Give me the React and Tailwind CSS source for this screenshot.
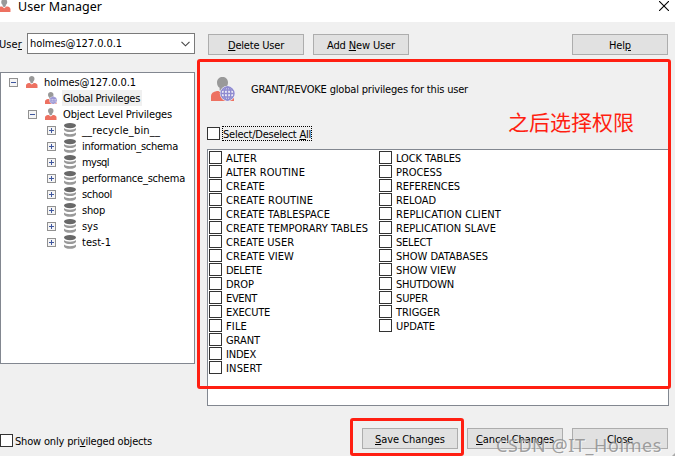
import { useLayoutEffect, useRef, useState } from "react";

// Text whose letter spacing is adjusted so that the run is `w` pixels wide.
function Fitted({ w, className = "", children }) {
  const ref = useRef(null);
  const [spacing, setSpacing] = useState(0);
  useLayoutEffect(() => {
    const el = ref.current;
    const count = el.textContent.length;
    setSpacing((w - el.getBoundingClientRect().width) / count);
  }, [w]);
  return (
    <span ref={ref} className={`inline-block shrink-0 whitespace-pre ${className}`} style={{ letterSpacing: spacing }}>
      {children}
    </span>
  );
}

// Interface label, optically centred in its row.
const Label = ({ className = "", ...rest }) => <Fitted className={`pt-0.5 ${className}`} {...rest} />;

const Key = ({ children }) => <span className="underline underline-offset-1">{children}</span>;

function Button({ w, className = "", children }) {
  return (
    <button className={`flex h-[21px] w-24 shrink-0 items-center justify-center border border-[#adadad] bg-[#e1e1e1] ${className}`}>
      <Label w={w}>{children}</Label>
    </button>
  );
}

function PersonIcon({ size, globe = false, className = "" }) {
  return (
    <svg viewBox="0 0 24 24" width={size} height={size} className={`shrink-0 ${className}`}>
      <path d="M0 24v-5c0-2.500 2-4.500 6-5h1.500l4 3 4-3H17c4 .5 6 2.500 6 5v5z" fill="#ed7161" />
      <path d="M6 5.500C6 2 8.500 0 11.500 0S17 2 17 5.500c0 2.500-1 4.300-2.600 5.300v2.400l-2.900 1.800-2.900-1.800v-2.400C7 9.800 6 8 6 5.500z" fill="#999" />
      {globe && (
        <g>
          <circle cx="16.500" cy="16.500" r="7.700" fill="#f2f1f8" />
          <g fill="none" stroke="#8f8bd0" strokeWidth="1.400">
            <circle cx="16.500" cy="16.500" r="6.500" />
            <ellipse cx="16.500" cy="16.500" rx="3.300" ry="6.500" />
            <path d="M16.500 10v13M10 16.500h13M11 13h11M11 20h11" />
          </g>
        </g>
      )}
    </svg>
  );
}

function DatabaseIcon() {
  return (
    <svg width="12" height="14" viewBox="0 0 12 14" className="ml-2 shrink-0">
      <ellipse cx="6" cy="2.600" rx="6" ry="2.600" fill="#686868" />
      <path d="M0 5c1 1.300 3.500 1.700 6 1.700S11 6.300 12 5v1.800C11.500 8.500 9 9.100 6 9.100S.5 8.500 0 6.800zM0 9.600c1 1.300 3.500 1.700 6 1.700s5-.4 6-1.700v1.900c-.5 1.700-3 2.300-6 2.300s-5.500-.6-6-2.300z" fill="#999" />
    </svg>
  );
}

function Toggle({ plus = false }) {
  return (
    <svg width="9" height="9" className="shrink-0" shapeRendering="crispEdges">
      <rect x=".5" y=".5" width="8" height="8" rx="1" fill="#f5f5f5" stroke="#919191" />
      <path d={plus ? "M2 4.500h5M4.500 2v5" : "M2 4.500h5"} stroke="#3f579f" />
    </svg>
  );
}

const Box = () => <span className="size-[13px] shrink-0 border border-[#333] bg-white" />;

const databases = [
  ["__recycle_bin__", 78],
  ["information_schema", 96],
  ["mysql", 27],
  ["performance_schema", 103],
  ["school", 30],
  ["shop", 23],
  ["sys", 16],
  ["test-1", 29],
];

const leftPrivileges = [
  ["ALTER", 31], ["ALTER ROUTINE", 79], ["CREATE", 39], ["CREATE ROUTINE", 87],
  ["CREATE TABLESPACE", 104], ["CREATE TEMPORARY TABLES", 142], ["CREATE USER", 68],
  ["CREATE VIEW", 68], ["DELETE", 36], ["DROP", 28], ["EVENT", 31], ["EXECUTE", 44],
  ["FILE", 21], ["GRANT", 34], ["INDEX", 30], ["INSERT", 36],
];

const rightPrivileges = [
  ["LOCK TABLES", 65], ["PROCESS", 46], ["REFERENCES", 64], ["RELOAD", 40],
  ["REPLICATION CLIENT", 105], ["REPLICATION SLAVE", 100], ["SELECT", 36],
  ["SHOW DATABASES", 92], ["SHOW VIEW", 60], ["SHUTDOWN", 58], ["SUPER", 32],
  ["TRIGGER", 44], ["UPDATE", 39],
];

function PrivilegeColumn({ items, className = "" }) {
  return (
    <div className={`shrink-0 ${className}`}>
      {items.map(([name, w]) => (
        <label key={name} className="flex h-3.5 items-start">
          <Box />
          <Fitted w={w} className="ml-1 pt-px">{name}</Fitted>
        </label>
      ))}
    </div>
  );
}

export default function App() {
  return (
    <div className="relative flex h-[456px] w-[675px] flex-col overflow-hidden bg-[#f0f0f0] font-['DejaVu_Sans_Condensed','DejaVu_Sans',sans-serif] text-[11px] leading-[14px] text-black">
      <header className="flex h-[22px] shrink-0 bg-white">
        <PersonIcon size={13} className="-ml-0.5 -mt-px" />
        <Fitted w={84} className="ml-[7px] font-['Noto_Sans',sans-serif] text-[12.5px]">User Manager</Fitted>
        <svg width="10" height="10" viewBox="0 0 10 10" className="ml-auto mr-1.5 mt-px" stroke="#000" strokeWidth="1.100">
          <path d="M0 0l10 10M10 0L0 10" />
        </svg>
      </header>

      <div className="flex min-h-0 flex-1">
        <aside className="flex w-[195px] shrink-0 flex-col">
          <div className="mt-[11px] flex h-[21px] items-center">
            <Label w={23} className="-ml-px">Use<Key>r</Key></Label>
            <div className="ml-[5px] flex h-[21px] flex-1 items-center border border-[#7a7a7a] bg-white pl-0.5 pr-1">
              <Fitted w={92}>holmes@127.0.0.1</Fitted>
              <svg width="9" height="6" viewBox="0 0 9 6" className="ml-auto" fill="none" stroke="#444" strokeWidth="1.100">
                <path d="M.5 .8l4 4 4-4" />
              </svg>
            </div>
          </div>

          <div className="mt-[18px] h-[292px] border border-[#828790] bg-white pt-px">
            <div className="flex h-4 items-center pl-2">
              <Toggle />
              <PersonIcon size={12} className="ml-2" />
              <Label w={92} className="ml-1.5">holmes@127.0.0.1</Label>
            </div>
            <div className="flex h-4 items-center pl-11">
              <PersonIcon size={12} globe />
              <span className="ml-[5px] flex h-4 w-20 items-center bg-[#f0f0f0] pl-px"><Label w={77}>Global Privileges</Label></span>
            </div>
            <div className="flex h-4 items-center pl-[27px]">
              <Toggle />
              <PersonIcon size={12} className="ml-2" />
              <Label w={109} className="ml-1.5">Object Level Privileges</Label>
            </div>
            {databases.map(([name, w]) => (
              <div key={name} className="flex h-4 items-center pl-[46px]">
                <Toggle plus />
                <DatabaseIcon />
                <Label w={w} className="ml-1.5">{name}</Label>
              </div>
            ))}
          </div>

          <label className="mt-[70px] flex h-[13px] items-center">
            <Box />
            <Label w={137} className="ml-[2px]">Show only pri<Key>v</Key>ileged objects</Label>
          </label>
        </aside>

        <main className="flex min-w-0 flex-1 flex-col pl-3 pr-1.5">
          <div className="mt-3 flex pl-px">
            <Button w={56}><Key>D</Key>elete User</Button>
            <Button w={68} className="ml-[9px]">Add <Key>N</Key>ew User</Button>
            <Button w={22} className="ml-auto mr-px">Hel<Key>p</Key></Button>
          </div>

          <div className="mt-[22px] flex h-6 items-center pl-1">
            <PersonIcon size={24} globe />
            <Label w={217} className="ml-[16px]">GRANT/REVOKE global privileges for this user</Label>
          </div>

          <label className="mt-[25px] flex h-[15px] items-center">
            <Box />
            <span className="ml-0.5 flex h-[15px] w-[90px] items-center border border-dotted border-black"><Label w={88}>Select/Deselect <Key>A</Key>ll</Label></span>
          </label>

          <div className="mt-2 flex h-[257px] border border-[#828790] bg-white pl-px pt-px">
            <PrivilegeColumn items={leftPrivileges} className="w-[170px]" />
            <PrivilegeColumn items={rightPrivileges} />
          </div>

          <div className="mt-[22px] flex justify-end gap-[9px] pr-px">
            <Button w={70}><Key>S</Key>ave Changes</Button>
            <Button w={78}><Key>C</Key>ancel Changes</Button>
            <Button w={26}>Close</Button>
          </div>
        </main>
      </div>

      <div className="pointer-events-none absolute left-[197px] top-[59px] h-[330px] w-[474px] rounded-[3px] border-[3px] border-[#ff1f12]" />
      <div className="pointer-events-none absolute left-[350px] top-[418px] h-[38px] w-[114px] rounded-[3px] border-[3px] border-[#ff1f12]" />
      <div className="absolute left-[508px] top-[107px] font-['Noto_Sans_CJK_SC',sans-serif] text-[21px] leading-7 text-[#ff1f12]">
        <Fitted w={126}>之后选择权限</Fitted>
      </div>
      <div className="absolute left-[496px] top-[434px] font-['Noto_Sans',sans-serif] text-[18px] leading-[22px] text-[#888]/80 [text-shadow:1px_1px_0_#fff9]">
        <Fitted w={166}>CSDN @IT_Holmes</Fitted>
      </div>
      <svg width="3" height="3" className="absolute bottom-0 right-0"><path d="M3 0v3H0z" fill="#aaa" /></svg>
    </div>
  );
}
